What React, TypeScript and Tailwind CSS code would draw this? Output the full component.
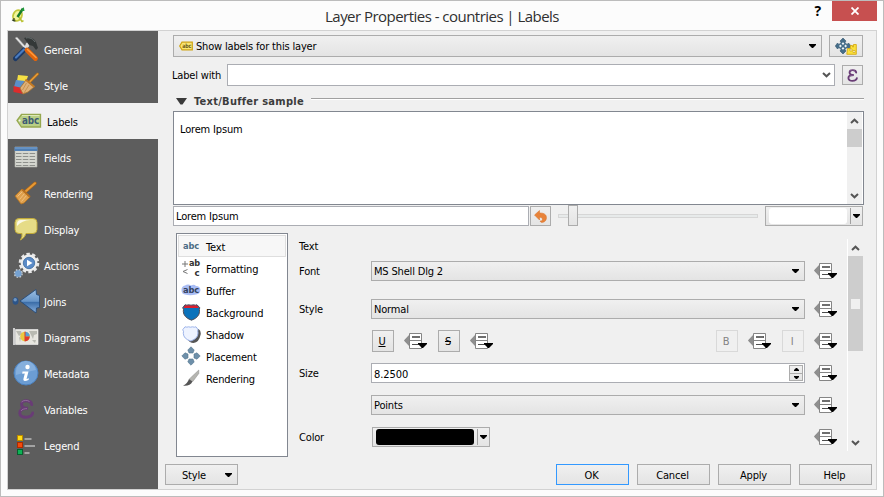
import React from "react";

type IconProps = { className?: string };

const Tools = () => (
  <svg width="26" height="26" viewBox="0 0 26 26">
    <path d="M2 2l2-1 9 10-1.500 1.500z" fill="#e4e4e4" stroke="#8a8a8a" strokeWidth=".5" />
    <path d="M11 14l-8.500 8.500" stroke="#1d3a66" strokeWidth="5" strokeLinecap="round" />
    <path d="M11 13.500l-8 8" stroke="#4a7cc0" strokeWidth="2.200" strokeLinecap="round" />
    <path d="M13.500 9.500l3-3M12 12l3-3" stroke="#ddd" strokeWidth="3.500" />
    <path d="M14 14l8.500 8.500" stroke="#e2640c" strokeWidth="4.800" strokeLinecap="round" />
    <path d="M14.500 13.500l8.500 8" stroke="#ff9b3d" strokeWidth="1.600" strokeLinecap="round" />
    <path d="M11 2c5-2 10 0 12 4l2 6-2 2-3-4-4-1-3-4z" fill="#343838" />
    <path d="M13 2c4-1 7 1 9 4" stroke="#6b7273" fill="none" />
  </svg>
);
const StyleIcon = () => (
  <svg width="26" height="26" viewBox="0 0 26 26">
    <path d="M5 3l10 1-2 6-9-1z" fill="#f5e044" />
    <path d="M3 8l9 1-3 8-8-2z" fill="#5b8fc9" />
    <path d="M.5 14l9 2 1 6-10-2z" fill="#dd2c2c" />
    <path d="M17 9.500L24.500 2" stroke="#a56a1f" strokeWidth="3" strokeLinecap="round" />
    <path d="M17 9.500L24.500 2" stroke="#e79d3a" strokeWidth="1.600" strokeLinecap="round" />
    <path d="M13 8l8 7-6 5-5 2-3-6z" fill="#deb078" stroke="#a8742f" strokeWidth=".8" />
    <path d="M13.500 11l-4 7M16 13l-5 8" stroke="#c08a45" strokeWidth=".8" />
    <path d="M12.500 7.500l9 7.500" stroke="#c37a25" strokeWidth="2" />
  </svg>
);
const TagIcon = () => (
  <svg width="26" height="16" viewBox="0 0 26 16">
    <path d="M1 7.500L5.500 1.500H24.500V14H5.500z" fill="#b9cf86" stroke="#96a84f" strokeWidth="1.300" />
    <path d="M6 2.500H23.500" stroke="#dde8b8" />
    <circle cx="3.600" cy="7.600" r="1" fill="#f5f7e8" />
    <text x="6" y="11" fontSize="10" fontWeight="700" fontFamily="DejaVu Sans" textLength="17" lengthAdjust="spacingAndGlyphs" fill="#3d5b75">abc</text>
  </svg>
);
const Fields = () => (
  <svg width="24" height="22" viewBox="0 0 24 22">
    <path d="M1 1h22v20H1z" fill="#d5d7d0" stroke="#aeb0aa" strokeWidth=".6" />
    <path d="M.5 1h23v4H.500z" fill="#4f7fb5" />
    <path d="M1 2h22" stroke="#7fa7d3" />
    <path d="M2 7.500h20M2 10.500h20M2 13.500h20M2 16.500h20M2 19.500h20" stroke="#8e908c" strokeWidth="1" strokeDasharray="5.500 1.300" />
  </svg>
);
const Broom = () => (
  <svg width="24" height="24" viewBox="0 0 24 24">
    <path d="M12 10L21 2.200" stroke="#a8641a" strokeWidth="3.400" strokeLinecap="round" />
    <path d="M12 10L21 2.200" stroke="#e79a35" strokeWidth="2" strokeLinecap="round" />
    <path d="M8 8l8 8-6 6-3 1-6-8z" fill="#dfa04d" stroke="#b5741f" strokeWidth=".8" />
    <path d="M8.500 10.500l-5 5M10.500 12.500l-5 6M12.500 14.500l-5 6" stroke="#f0c384" strokeWidth=".9" />
    <path d="M8 8.500l8 7.500" stroke="#b8701f" strokeWidth="1.800" />
  </svg>
);
const Bubble = () => (
  <svg width="26" height="24" viewBox="0 0 26 24">
    <path d="M6 1.500h14q4 0 4 4v7q0 4-4 4h-7q-1 4-5.500 6.500 2-3.500 1.500-6.500H6q-4 0-4-4v-7q0-4 4-4z" fill="#e6dc87" stroke="#c0a93a" />
    <path d="M4 9V7q0-4 4-4h9q-8 .5-13 6z" fill="#fbf9e6" />
  </svg>
);
const Gear = () => (
  <svg width="27" height="28" viewBox="0 0 27 28">
    <circle cx="16" cy="12" r="9" fill="none" stroke="#e8e8e8" strokeWidth="2.600" strokeDasharray="3.400 2.255" />
    <circle cx="16" cy="12" r="8.400" fill="#eee" />
    <circle cx="16" cy="12" r="5.700" fill="#5b8bc7" stroke="#39699f" strokeWidth=".8" />
    <path d="M14 8.800l5.500 3.200-5.500 3.200z" fill="#fff" />
    <circle cx="5.300" cy="22.500" r="3.600" fill="#75a1d1" />
    <circle cx="5.300" cy="22.500" r="3.900" fill="none" stroke="#c3ccd5" strokeWidth="1.300" strokeDasharray="1.700 1.363" />
  </svg>
);
const Joins = () => (
  <svg width="28" height="26" viewBox="0 0 28 26">
    <defs>
      <linearGradient id="jn" x1="0" y1="0" x2="0" y2="1">
        <stop offset="0" stopColor="#9cc0e4" /><stop offset=".5" stopColor="#6795c8" /><stop offset=".55" stopColor="#3c6ea9" /><stop offset="1" stopColor="#8ab2e0" />
      </linearGradient>
    </defs>
    <ellipse cx="3.500" cy="13" rx="3" ry="3.700" fill="#2c5488" />
    <ellipse cx="3.200" cy="11.800" rx="1.700" ry="1.800" fill="#7197c2" />
    <path d="M8 13L24 1.500l.5 5 3 1v12l-3 .5-.5 5z" fill="url(#jn)" stroke="#264b78" strokeWidth=".9" />
  </svg>
);
const Diagrams = () => (
  <svg width="26" height="18" viewBox="0 0 26 18">
    <path d="M1 0v17" stroke="#eaeaea" strokeWidth="1.600" />
    <path d="M2.500 1.500h22.500v15H2.500z" fill="#e7e6e0" stroke="#f5f5f5" strokeWidth=".6" />
    <path d="M3 3l5 0 1 3-3 2zM16 3l8 0 0 3-3 1-1 4-2-4zM6 9l2 1-1 4zM19 12l4 0-1 3z" fill="#b9bab2" />
    <circle cx="12" cy="8.500" r="4.800" fill="#eac93f" />
    <path d="M12 8.500V3.700a4.800 4.800 0 0 1 4.800 4.800z" fill="#55a0d5" />
    <path d="M12 8.500h4.800a4.800 4.800 0 0 1-4.800 4.800z" fill="#dd3a2c" />
    <path d="M12 3.700v9.600" stroke="#dd3a2c" strokeWidth="1" />
  </svg>
);
const Info = () => (
  <svg width="26" height="26" viewBox="0 0 26 26">
    <circle cx="13" cy="13" r="12" fill="#6c9dd3" stroke="#4b80bd" />
    <path d="M3 12a10 10 0 0 1 20-2Q12 12 3 15z" fill="#85afdd" />
    <circle cx="14.500" cy="7" r="2.200" fill="#fff" />
    <path d="M9.500 11.500h6l-2 7.500 2.500-.8-.5 1.800q-6 2.500-5-1.500l1.300-5-2.600.2z" fill="#fff" />
  </svg>
);
const Epsilon = ({ className }: IconProps) => (
  <svg className={className} viewBox="0 0 16 20" fill="none">
    <path d="M13.700 5.500C13 .8 3.500.4 3.500 5.200c0 3 3 4 6.500 4-5 0-8.300 1.600-8.300 4.800 0 5.800 12 5.500 13 0" stroke="#693c76" strokeWidth="2.900" strokeLinecap="round" />
    <path d="M3.500 3c2-2 6-2 8-.5M3 12c1-2 4-2.300 6-2.400" stroke="#a98bb0" strokeWidth=".6" />
  </svg>
);
const Legend = () => (
  <svg width="20" height="22" viewBox="0 0 20 22">
    <rect x="1.500" y="1.500" width="5" height="5" fill="#ffdc14" stroke="#b98900" />
    <rect x="1.500" y="8.500" width="5" height="5" fill="#f44a0b" stroke="#ad2b00" />
    <rect x="1.500" y="15.500" width="5" height="5" fill="#0db155" stroke="#06602d" />
    <path d="M8.500 5h7M8.500 12h10.500M8.500 19h5" stroke="#a3a3a3" strokeWidth="2" />
  </svg>
);

const Logo = () => (
  <svg width="16" height="18" viewBox="0 0 16 18">
    <ellipse cx="6.500" cy="9.500" rx="4.300" ry="5.500" transform="rotate(22 6.500 9.500)" fill="#f4f59a" stroke="#c3c83c" strokeWidth="1.800" />
    <path d="M8 11l3 4.500 1.500-.8" stroke="#b8c02e" strokeWidth="1.500" fill="none" />
    <path d="M6.500 11L12 2.500" stroke="#157a2a" strokeWidth="2.400" />
    <path d="M10 5l2.800-4 .7 4z" fill="#1d9a3a" />
    <path d="M1 14l3.500 1M3 12v3.500" stroke="#26351b" strokeWidth="1.100" />
  </svg>
);
const SmallTag = () => (
  <svg width="14" height="10" viewBox="0 0 14 10">
    <path d="M.7 5L3 1.200h10.300v7.600H3z" fill="#fbe673" stroke="#cfa414" strokeWidth="1.200" />
    <text x="3.300" y="7" fontSize="6" fontWeight="700" fontFamily="DejaVu Sans" textLength="9" lengthAdjust="spacingAndGlyphs" fill="#6a5a1a">abc</text>
  </svg>
);
const Move = () => (
  <svg width="22" height="18" viewBox="0 0 22 18">
    <path d="M8 1l3 3-1 1.500 2 2L13.500 6l2.500 3-2.500 3-1.500-1.500-2 2 1 1.500-3 3-3-3 1-1.500-2-2L2.500 12 .3 9l2.200-3L4 7.500l2-2L5 4z" fill="#456d89" stroke="#34566e" strokeWidth=".6" />
    <path d="M8 5.200l1.400 1.400L8 8 6.600 6.600zM8 10l1.400 1.400L8 12.800l-1.400-1.400zM5.400 7.600L6.800 9l-1.400 1.400L4 9zM10.600 7.600L12 9l-1.400 1.400L9.200 9z" fill="#eef4f7" />
    <path d="M12.500 11.500h3v-3h2v1.500h1V7.500h2.800v9.800h-9.500z" fill="#fae13c" stroke="#d7ac14" strokeWidth=".9" />
    <path d="M15 12h2v2h-2zM18 13.500h2v2h-2z" fill="#fffbe0" stroke="#c99c0c" strokeWidth=".6" />
  </svg>
);
const Undo = () => (
  <svg width="13" height="13" viewBox="0 0 13 13">
    <path d="M.5 5L5.500.5V3c6-.3 7.500 3 6.800 6-.6 2.500-3 3.800-5.300 3.300L6 11c3.500.3 3.300-4-.5-3.800V10z" fill="#e8833a" stroke="#d67127" strokeWidth=".5" />
  </svg>
);

const Down = ({ className = "" }: IconProps) => (
  <svg className={`block shrink-0 ${className}`} width="7" height="4" viewBox="0 0 7 4">
    <path d="M0 0h7v1L4 4H3L0 1z" fill="#000" />
  </svg>
);
const Chevron = ({ className = "" }: IconProps) => (
  <svg className={`block shrink-0 ${className}`} width="9" height="6" viewBox="0 0 9 6">
    <path d="M1 1l3.500 3.300L8 1" fill="none" stroke="#555" strokeWidth="2" />
  </svg>
);

/* Data-defined override button */
const Override = () => (
  <svg className="block shrink-0" width="24" height="18" viewBox="0 0 24 18">
    <path d="M.3 8.500L5.500 3v11z" fill="#8f8f8f" stroke="#6f6f6f" strokeWidth=".6" />
    <path d="M5.500 1.500h12v15h-12z" fill="#fff" stroke="#858585" />
    <path d="M8 5h8" stroke="#5f5f5f" strokeWidth="1.800" />
    <path d="M6 8.500h11" stroke="#858585" />
    <path d="M8 12.500h8" stroke="#4d4d4d" />
    <path d="M14 11h9v1l-4 4h-1l-4-4z" fill="#000" />
  </svg>
);

const Shield = ({ shadow = false }: { shadow?: boolean }) => (
  <svg width="19" height="17" viewBox="0 0 19 17">
    {shadow && <path d="M6 3h10.500q3 2 2 6-1.500 7.500-7 7.900-4 0-6-4z" fill="#555" />}
    <path
      d={shadow
        ? "M3 .8q2 .8 3.500 0 2 .8 4 0 2 .8 3.500 0l2 2.700q-.5 1.500 0 3.500Q16 12.500 8.800 15 1.500 13 1.300 7.300 2 5 .7 3.800z"
        : "M3 .8q2 .8 3.500 0 2.500.8 5 0 2 .8 3.500 0l2.800 3q-.8 1.200-.3 3.500 0 6-8 8.900Q1.500 13.300 1.300 7.300 2 5 .7 3.800z"}
      fill={shadow ? "#eef3ff" : "#0b72bb"} stroke={shadow ? "#9db4ea" : "#4e4b56"} strokeWidth="1"
    />
    {!shadow && <path d="M3.200 1.200q2 .8 3.500 0 2.500.8 5 0 1.500.8 3 0L17 4h-15.500z" fill="#dc1f2d" />}
  </svg>
);
const AbcIcon = ({ halo = false }: { halo?: boolean }) => (
  <svg width="20" height="12" viewBox="0 0 20 12">
    {halo && <path d="M4 1.500q3-2 6 0 3-1.500 5 .5 4 0 4.500 4-.5 4-4.500 4.500-6 1.500-11 0Q.5 10 .5 6T4 1.500z" fill="#a9bdf5" />}
    <text x="2" y={halo ? 9 : 8.500} fontSize="9.500" fontWeight="700" fontFamily="DejaVu Sans" textLength="16" lengthAdjust="spacingAndGlyphs" fill={halo ? "#34425e" : "#4c6c86"}>abc</text>
  </svg>
);
const FormatIcon = () => (
  <svg width="20" height="18" viewBox="0 0 20 18" fontFamily="DejaVu Sans">
    <path d="M1 5h6M4 2v6M6.500 10.500l-4.500 2 4.500 2" fill="none" stroke="#777" />
    <text x="8" y="7" fontSize="8" fontWeight="700" textLength="11" lengthAdjust="spacingAndGlyphs" fill="#333">ab</text>
    <text x="13.500" y="16.500" fontSize="8" fontWeight="700" textLength="5" lengthAdjust="spacingAndGlyphs" fill="#333">c</text>
  </svg>
);
const PlacementIcon = () => (
  <svg width="20" height="20" viewBox="0 0 20 20" fill="#6d8fa9" stroke="#55778f" strokeWidth=".6">
    <path d="M10 .8l3.200 3.200L12 7H8L6.800 4zM10 19.200l3.200-3.200L12 13H8l-1.200 3zM.8 10L4 6.800 7 8v4l-3 1.200zM19.200 10L16 6.800 13 8v4l3 1.200z" />
  </svg>
);
const BrushIcon = () => (
  <svg width="18" height="18" viewBox="0 0 18 18">
    <path d="M16.800 1v3.500l-6 8-3.500-2.500z" fill="#b5b5b0" stroke="#8c8c8c" strokeWidth=".5" />
    <path d="M7 10l3.500 2.500Q8 17.500 1 16.700 5.500 14.500 7 10z" fill="#555" />
  </svg>
);

const nav: { label: string; icon: React.ReactNode; on?: boolean }[] = [
  { label: "General", icon: <Tools /> },
  { label: "Style", icon: <StyleIcon /> },
  { label: "Labels", icon: <TagIcon />, on: true },
  { label: "Fields", icon: <Fields /> },
  { label: "Rendering", icon: <Broom /> },
  { label: "Display", icon: <Bubble /> },
  { label: "Actions", icon: <Gear /> },
  { label: "Joins", icon: <Joins /> },
  { label: "Diagrams", icon: <Diagrams /> },
  { label: "Metadata", icon: <Info /> },
  { label: "Variables", icon: <Epsilon className="h-5 w-4" /> },
  { label: "Legend", icon: <Legend /> },
];

const pages: { label: string; icon: React.ReactNode }[] = [
  { label: "Text", icon: <AbcIcon /> },
  { label: "Formatting", icon: <FormatIcon /> },
  { label: "Buffer", icon: <AbcIcon halo /> },
  { label: "Background", icon: <Shield /> },
  { label: "Shadow", icon: <Shield shadow /> },
  { label: "Placement", icon: <PlacementIcon /> },
  { label: "Rendering", icon: <BrushIcon /> },
];

const face = "border border-[#acacac] bg-linear-to-b from-[#f0f0f0] to-[#e4e4e4]";

const Combo = ({ text }: { text: string }) => (
  <div className={`flex h-5 w-[434px] items-center justify-between pr-[5px] pl-[2px] ${face}`}>
    <span className="pt-[2px]">{text}</span>
    <Down />
  </div>
);
const Row = ({ label, className, children }: { label: string; className: string; children: React.ReactNode }) => (
  <div className={`flex items-center ${className}`}>
    <span className="-ml-px w-[72px] shrink-0 pt-[2px]">{label}</span>
    {children}
  </div>
);
const Toggle = ({ children, off = false, className = "" }: { children: React.ReactNode; off?: boolean; className?: string }) => (
  <div className={`flex h-[22px] w-[22px] shrink-0 items-center justify-center pt-[2px] pr-[2px] ${off ? "border border-[#d9d9d9] text-[#838383]" : face} ${className}`}>{children}</div>
);
const DialogButton = ({ text, primary = false }: { text: string; primary?: boolean }) => (
  <div className={`flex h-[21px] w-[73px] items-center justify-center pt-[2px] pr-[2px] ${primary ? "border border-[#3399ff] bg-linear-to-b from-[#f0f0f0] to-[#e4e4e4]" : face}`}>{text}</div>
);

export default function App() {
  return (
    <div className="flex h-[497px] w-[884px] flex-col overflow-hidden border border-[#bcbcbc] bg-[#fcfcfc] pr-[6px] pl-[6px] font-['DejaVu_Sans_Condensed','DejaVu_Sans',sans-serif] text-[11px] leading-[14px] tracking-[-0.17px] whitespace-nowrap text-black">
      <header className="flex h-[29px] shrink-0">
        <div className="mt-[5px] ml-1 w-[60px]"><Logo /></div>
        <h1 className="mt-[5px] flex-1 text-center font-['Open_Sans',sans-serif] text-[15px] leading-5 tracking-[-0.53px] text-[#303030]">Layer Properties - countries | Labels</h1>
        <div className="flex w-[64px] justify-end">
          <span className="mr-[11px] font-['Open_Sans',sans-serif] text-[14px] leading-5 font-bold">?</span>
          <div className="flex h-5 w-[45px] items-center justify-center bg-[#c75050]">
            <svg width="8" height="8" viewBox="0 0 8 8"><path d="M.5.5l7 7M7.500.5l-7 7" stroke="#fff" strokeWidth="1.800" /></svg>
          </div>
        </div>
      </header>

      <div className="flex h-[460px] shrink-0 border border-[#d2d2d2] bg-[#f0f0f0]">
        <nav className="w-[150px] shrink-0 bg-[#5d5d5d]">
          {nav.map((n) => (
            <div key={n.label} className={`flex h-9 items-center ${n.on ? "bg-[#f0f0f0] pl-[7px] text-black" : "pl-1 text-white"}`}>
              <span className="flex w-[28px] justify-center">{n.icon}</span>
              <span className="pt-[4px] pl-1">{n.label}</span>
            </div>
          ))}
        </nav>

        <main className="flex-1 pt-1 pl-[7px]">
          <div className="flex pl-2">
            <div className={`flex h-[22px] w-[649px] items-center pr-[5px] pl-[5px] ${face}`}>
              <SmallTag />
              <span className="flex-1 pt-[2px] pl-[3px]">Show labels for this layer</span>
              <Down />
            </div>
            <div className={`ml-[7px] flex h-[22px] w-[34px] items-center justify-center ${face}`}><Move /></div>
          </div>

          <div className="mt-[7px] flex items-center pl-[7px]">
            <span className="w-[55px] pt-[2px]">Label with</span>
            <div className="flex h-[22px] w-[608px] items-center justify-end border border-[#abadb3] bg-white pr-[3px]"><Chevron /></div>
            <div className={`ml-[7px] flex h-5 w-[21px] items-center justify-center ${face}`}><Epsilon className="h-[13px] w-[11px]" /></div>
          </div>

          <div className="mt-[8px] flex h-[17px] pl-[11px]">
            <svg className="mt-1" width="11" height="7" viewBox="0 0 11 7"><path d="M0 0h11L6.500 6.500h-2z" fill="#3a3a3a" /></svg>
            <span className="ml-[7px] w-[117px] pt-px font-bold tracking-[0.27px] text-[#3c3c3c]">Text/Buffer sample</span>
            <div className="mt-1 h-[2px] w-[553px] border-t border-[#a0a0a0] bg-white" />
          </div>

          <div className="ml-2 flex h-[94px] w-[691px] border border-[#828790] bg-white">
            <span className="flex-1 pt-[11px] pl-[6px]">Lorem Ipsum</span>
            <div className="mr-[1px] flex w-[15px] flex-col items-center bg-[#f0f0f0]">
              <Chevron className="mt-[6px] rotate-180" />
              <div className="mt-[5px] h-[18px] w-full bg-[#cdcdcd]" />
              <div className="flex-1" />
              <Chevron className="mb-[5px]" />
            </div>
          </div>

          <div className="mt-[1px] flex pl-2">
            <div className="flex h-5 w-[356px] items-center border border-[#abadb3] bg-white pt-[2px] pl-[2px]">Lorem Ipsum</div>
            <div className={`ml-[1px] flex h-5 w-[21px] items-center justify-center ${face}`}><Undo /></div>
            <div className="ml-[7px] flex h-5 w-[200px] items-center">
              <div className="h-1 w-[10px] border border-r-0 border-[#d6d6d6] bg-[#e7eaea]" />
              <div className={`-mt-[1px] h-[21px] w-[10px] ${face}`} />
              <div className="h-1 flex-1 border border-l-0 border-[#d6d6d6] bg-[#e7eaea]" />
            </div>
            <div className={`ml-[7px] flex h-5 w-[98px] items-center ${face}`}>
              <div className="ml-[3px] h-4 w-[78px] rounded-[3px] bg-white" />
              <div className="mr-[2px] ml-[3px] h-4 w-px bg-[#a0a0a0]" />
              <Down />
            </div>
          </div>

          <div className="mt-[7px] flex h-[224px] pl-[11px]">
            <div className="h-[224px] w-[112px] border border-[#828790] bg-white p-[1px]">
              {pages.map((p, i) => (
                <div key={p.label} className={`flex h-[22px] w-[108px] items-center border ${i === 0 ? "border-[#dedede] bg-[#f7f7f7]" : "border-transparent"}`}>
                  <span className="ml-[2px] flex w-5 justify-center">{p.icon}</span>
                  <span className="pt-[4px] pl-[5px]">{p.label}</span>
                </div>
              ))}
            </div>

            <div className="w-[559px] pt-[6px] pl-3">
              <div className="-ml-px h-[14px] pt-px">Text</div>
              <Row label="Font" className="mt-2 h-5"><Combo text="MS Shell Dlg 2" /><span className="ml-[9px]"><Override /></span></Row>
              <Row label="Style" className="mt-[18px] h-5"><Combo text="Normal" /><span className="ml-[9px]"><Override /></span></Row>
              <div className="mt-[11px] flex h-[22px] items-center pl-[72px]">
                <Toggle className="underline">U</Toggle>
                <span className="ml-[10px]"><Override /></span>
                <Toggle className="ml-[10px] line-through">S</Toggle>
                <span className="ml-[10px] flex-1"><Override /></span>
                <Toggle off>B</Toggle>
                <span className="ml-[10px]"><Override /></span>
                <Toggle off className="ml-[10px]">I</Toggle>
                <span className="mr-[9px] ml-[10px]"><Override /></span>
              </div>
              <Row label="Size" className="mt-[11px] h-5">
                <div className="flex h-5 w-[434px] items-center justify-between border border-[#abadb3] bg-white pr-[1px] pl-[2px]">
                  <span className="pt-[3px] tracking-[-0.05px]">8.2500</span>
                  <div className={`flex h-4 w-[14px] flex-col items-center ${face}`}>
                    <div className="flex h-[7px] items-center"><svg width="5" height="3" viewBox="0 0 5 3"><path d="M2 0h1l2 2v1H0V2z" /></svg></div>
                    <div className="h-px w-full bg-[#acacac]" />
                    <div className="flex h-[6px] items-center"><svg width="5" height="3" viewBox="0 0 5 3"><path d="M0 0h5v1L3 3H2L0 1z" /></svg></div>
                  </div>
                </div>
                <span className="ml-[9px]"><Override /></span>
              </Row>
              <Row label="" className="mt-3 h-5"><Combo text="Points" /><span className="ml-[9px]"><Override /></span></Row>
              <Row label="Color" className="mt-3 h-5">
                <div className={`ml-[1px] flex h-5 w-[118px] items-center ${face}`}>
                  <div className="ml-[3px] h-4 w-[98px] rounded-[3px] bg-black" />
                  <div className="mr-[2px] ml-[3px] h-4 w-px bg-[#a0a0a0]" />
                  <Down />
                </div>
                <span className="ml-[324px]"><Override /></span>
              </Row>
            </div>

            <div className="mt-[6px] flex h-[212px] w-4 flex-col items-center border-l border-white">
              <Chevron className="mt-[6px] rotate-180" />
              <div className="mt-[5px] flex h-[95px] w-[15px] items-center justify-center bg-[#cdcdcd]"><div className="h-[10px] w-[9px] bg-[#f0f0f0]" /></div>
              <div className="flex-1" />
              <Chevron className="mb-[5px]" />
            </div>
          </div>

          <div className="mt-[7px] flex">
            <div className={`flex h-[21px] w-[73px] items-center justify-between pr-[5px] pl-4 ${face}`}><span className="pt-[2px]">Style</span><Down /></div>
            <div className="ml-[318px] flex gap-2">
              <DialogButton text="OK" primary />
              <DialogButton text="Cancel" />
              <DialogButton text="Apply" />
              <DialogButton text="Help" />
            </div>
          </div>
        </main>
      </div>
    </div>
  );
}
